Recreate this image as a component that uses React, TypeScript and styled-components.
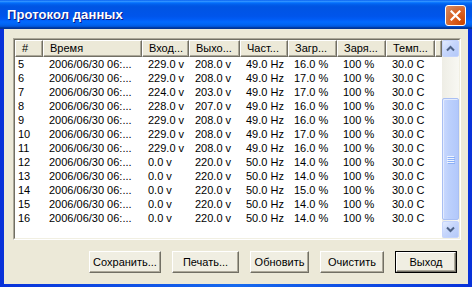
import React from "react";
import styled, { createGlobalStyle } from "styled-components";

const GlobalStyle = createGlobalStyle`
  html, body { margin: 0; padding: 0; background: #ffffff; }
  * { box-sizing: border-box; }
`;

const Window = styled.div`
  width: 472px;
  height: 287px;
  display: flex;
  flex-direction: column;
  background: #0842d6;
  font-family: "Liberation Sans", Arial, sans-serif;
  font-size: 11px;
  color: #000;
`;

const TitleBar = styled.div`
  height: 29px;
  flex: none;
  display: flex;
  align-items: center;
  justify-content: space-between;
  padding: 0 6px 0 7px;
  background: linear-gradient(
    to bottom,
    #0058ee 0%,
    #3593ff 4%,
    #288eff 6%,
    #127dff 8%,
    #036ffc 10%,
    #0262ee 14%,
    #0057e5 20%,
    #0054e3 24%,
    #0055eb 56%,
    #005bf5 66%,
    #026afe 76%,
    #0062ef 86%,
    #0052d6 92%,
    #0040ab 94%,
    #003092 100%
  );
`;

const Title = styled.span`
  color: #ffffff;
  font-family: "Liberation Sans", Arial, sans-serif;
  font-weight: bold;
  font-size: 13px;
  letter-spacing: 0.1px;
  text-shadow: 1px 1px #0a1883;
`;

const CloseButton = styled.div`
  width: 21px;
  height: 21px;
  border: 1px solid #ffffff;
  border-radius: 3px;
  background: radial-gradient(circle at 90% 90%, #cc4600 0%, #dc6527 55%, #cd7546 70%, #e38a5f 100%);
  display: flex;
  align-items: center;
  justify-content: center;
  margin-top: 1px;
`;

const Frame = styled.div`
  flex: 1;
  display: flex;
  padding: 0 4px 3px 4px;
  border-left: 0;
  background: linear-gradient(to right, #0831d9, #166aee 50%, #0831d9);
`;

const Client = styled.div`
  flex: 1;
  background: #ece9d8;
  display: flex;
  flex-direction: column;
  padding: 9px 7px 11px 9px;
`;

const ListOuter = styled.div`
  width: 448px;
  height: 202px;
  border-style: solid;
  border-width: 1px;
  border-color: #aca899 #ffffff #ffffff #aca899;
  flex: none;
`;

const ListInner = styled.div`
  width: 100%;
  height: 100%;
  border-style: solid;
  border-width: 1px;
  border-color: #716f64 #f1efe2 #f1efe2 #716f64;
  background: #ffffff;
  display: flex;
`;

const ListMain = styled.div`
  flex: 1;
  display: flex;
  flex-direction: column;
  overflow: hidden;
`;

const HeaderRow = styled.div`
  display: flex;
  height: 17px;
  flex: none;
`;

const HeaderCell = styled.div<{ $w: number }>`
  width: ${(p) => p.$w}px;
  flex: none;
  height: 17px;
  background: #ece9d8;
  border-style: solid;
  border-width: 1px;
  border-color: #ffffff #716f64 #716f64 #ffffff;
  box-shadow: inset -1px -1px #aca899;
  padding: 0 0 0 6px;
  line-height: 15px;
  white-space: nowrap;
  overflow: hidden;
`;

const HeaderFill = styled.div`
  flex: 1;
  height: 17px;
  background: #ece9d8;
  border-style: solid;
  border-width: 1px;
  border-color: #ffffff #716f64 #716f64 #ffffff;
  box-shadow: inset -1px -1px #aca899;
`;

const Row = styled.div`
  display: flex;
  height: 14px;
  flex: none;
`;

const Cell = styled.div<{ $w: number; $first?: boolean }>`
  width: ${(p) => p.$w}px;
  flex: none;
  padding-left: ${(p) => (p.$first ? 3 : 6)}px;
  line-height: 14px;
  white-space: nowrap;
  overflow: hidden;
`;

const ScrollBar = styled.div`
  width: 17px;
  flex: none;
  display: flex;
  flex-direction: column;
  background: linear-gradient(to right, #eeede5, #f8f8f3);
`;

const ScrollButton = styled.div`
  width: 17px;
  height: 17px;
  flex: none;
  border: 1px solid #c5d4fc;
  border-radius: 2px;
  background: linear-gradient(135deg, #e2ebfe 0%, #c6d6fc 45%, #b4c9f9 100%);
  display: flex;
  align-items: center;
  justify-content: center;
`;

const Track = styled.div`
  flex: 1;
  display: flex;
  flex-direction: column;
  padding-top: 41px;
  padding-bottom: 1px;
`;

const Thumb = styled.div`
  flex: 1;
  border: 1px solid #a9bff3;
  border-radius: 2px;
  background: linear-gradient(to right, #cad9fe 0%, #bcd0fc 40%, #b2c8fb 100%);
  box-shadow: inset 1px 1px #e4ecfe;
  display: flex;
  align-items: center;
  justify-content: center;
`;

const Grip = styled.div`
  width: 7px;
  display: flex;
  flex-direction: column;
  gap: 1px;
`;

const GripLine = styled.div`
  height: 1px;
  background: #eef4fe;
  box-shadow: 1px 1px #8cb0f8;
`;

const ButtonBar = styled.div`
  display: flex;
  justify-content: flex-end;
  gap: 11px;
  margin-top: 11px;
  padding-right: 4px;
`;

const Button = styled.div<{ $w: number; $default?: boolean }>`
  width: ${(p) => p.$w}px;
  height: 22px;
  border: ${(p) => (p.$default ? "1px solid #000000" : "0")};
  display: flex;
`;

const ButtonFace = styled.div`
  flex: 1;
  background: #f0eee2;
  border-style: solid;
  border-width: 1px;
  border-color: #ffffff #716f64 #716f64 #ffffff;
  box-shadow: inset -1px -1px #aca899;
  display: flex;
  align-items: center;
  justify-content: center;
  font-size: 11px;
  padding-bottom: 1px;
`;

const cols = [
  { label: "#", w: 28 },
  { label: "Время", w: 99 },
  { label: "Вход...", w: 47 },
  { label: "Выхо...", w: 51 },
  { label: "Част...", w: 48 },
  { label: "Загр...", w: 49 },
  { label: "Заря...", w: 49 },
  { label: "Темп...", w: 49 },
];

const rows: string[][] = [
  ["5", "229.0", "208.0", "49.0", "16.0"],
  ["6", "229.0", "208.0", "49.0", "17.0"],
  ["7", "224.0", "203.0", "49.0", "17.0"],
  ["8", "228.0", "207.0", "49.0", "16.0"],
  ["9", "229.0", "208.0", "49.0", "16.0"],
  ["10", "229.0", "208.0", "49.0", "17.0"],
  ["11", "229.0", "208.0", "49.0", "16.0"],
  ["12", "0.0", "220.0", "50.0", "14.0"],
  ["13", "0.0", "220.0", "50.0", "14.0"],
  ["14", "0.0", "220.0", "50.0", "15.0"],
  ["15", "0.0", "220.0", "50.0", "14.0"],
  ["16", "0.0", "220.0", "50.0", "14.0"],
];

const buttons = [
  { label: "Сохранить...", w: 72 },
  { label: "Печать...", w: 67 },
  { label: "Обновить", w: 59 },
  { label: "Очистить", w: 64 },
  { label: "Выход", w: 62, def: true },
];

export default function App() {
  return (
    <>
      <GlobalStyle />
      <Window>
        <TitleBar>
          <Title>Протокол данных</Title>
          <CloseButton>
            <svg width="11" height="11" viewBox="0 0 11 11">
              <path d="M1.5 1.5 L9.5 9.5 M9.5 1.5 L1.5 9.5" stroke="#ffffff" strokeWidth="2.2" strokeLinecap="square" />
            </svg>
          </CloseButton>
        </TitleBar>
        <Frame>
          <Client>
            <ListOuter>
              <ListInner>
                <ListMain>
                  <HeaderRow>
                    {cols.map((c) => (
                      <HeaderCell key={c.label} $w={c.w}>
                        {c.label}
                      </HeaderCell>
                    ))}
                    <HeaderFill />
                  </HeaderRow>
                  {rows.map((r) => (
                    <Row key={r[0]}>
                      <Cell $w={cols[0].w} $first>
                        {r[0]}
                      </Cell>
                      <Cell $w={cols[1].w}>2006/06/30 06:...</Cell>
                      <Cell $w={cols[2].w}>{r[1]} v</Cell>
                      <Cell $w={cols[3].w}>{r[2]} v</Cell>
                      <Cell $w={cols[4].w}>{r[3]} Hz</Cell>
                      <Cell $w={cols[5].w}>{r[4]} %</Cell>
                      <Cell $w={cols[6].w}>100 %</Cell>
                      <Cell $w={cols[7].w}>30.0 C</Cell>
                    </Row>
                  ))}
                </ListMain>
                <ScrollBar>
                  <ScrollButton>
                    <svg width="9" height="7" viewBox="0 0 9 7">
                      <path d="M1 5.5 L4.5 2 L8 5.5" stroke="#4d6185" strokeWidth="2" fill="none" />
                    </svg>
                  </ScrollButton>
                  <Track>
                    <Thumb>
                      <Grip>
                        <GripLine />
                        <GripLine />
                        <GripLine />
                        <GripLine />
                      </Grip>
                    </Thumb>
                  </Track>
                  <ScrollButton>
                    <svg width="9" height="7" viewBox="0 0 9 7">
                      <path d="M1 1.5 L4.5 5 L8 1.5" stroke="#4d6185" strokeWidth="2" fill="none" />
                    </svg>
                  </ScrollButton>
                </ScrollBar>
              </ListInner>
            </ListOuter>
            <ButtonBar>
              {buttons.map((b) => (
                <Button key={b.label} $w={b.w} $default={b.def}>
                  <ButtonFace>{b.label}</ButtonFace>
                </Button>
              ))}
            </ButtonBar>
          </Client>
        </Frame>
      </Window>
    </>
  );
}
